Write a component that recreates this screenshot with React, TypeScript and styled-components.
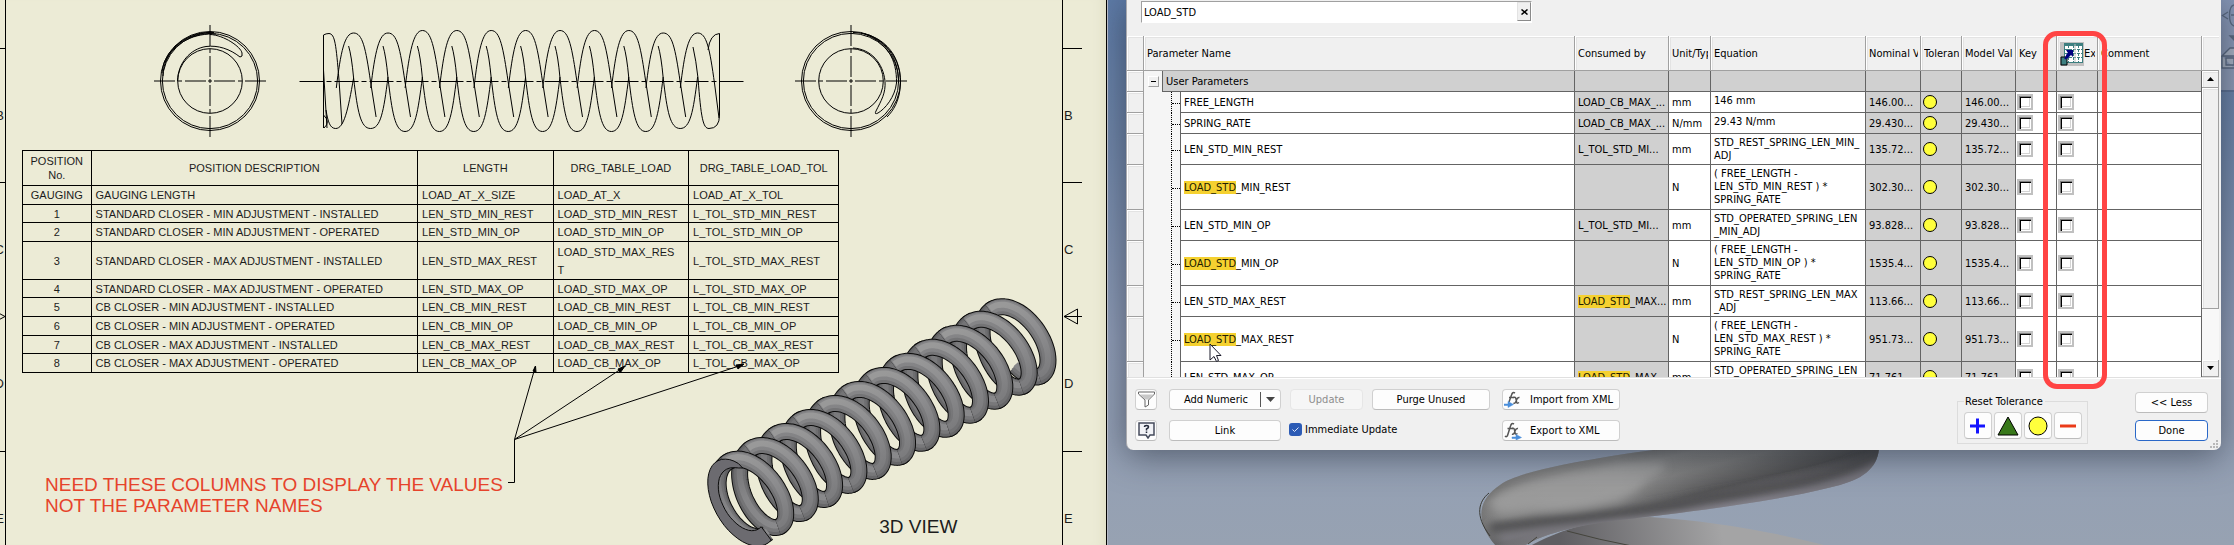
import React from "react";
import styled, { createGlobalStyle, css } from "styled-components";

const GlobalStyle = createGlobalStyle`
  * { box-sizing: border-box; }
  html, body { margin: 0; height: 100%; overflow: hidden; }
`;

const SHEET = "#ecebd6";
const GRID = "#646464";
const UI_FONT = `"DejaVu Sans Condensed", "DejaVu Sans", sans-serif`;
const DRAWING_FONT = `"Liberation Sans", Arial, sans-serif`;

const Screen = styled.div`
  display: grid;
  grid-template-columns: minmax(0, 1107fr) minmax(0, 1127fr);
  height: 100vh;
  overflow: hidden;
`;

/* ---------- drawing sheet ---------- */

const Sheet = styled.main`
  display: grid;
  grid-template-columns: 6px minmax(0, 1fr) 44px;
  background: ${SHEET};
  border-right: 1px solid #000;
  box-shadow: inset -12px 0 14px -12px #d9d8bd;
  font: 11px/14px ${DRAWING_FONT};
  color: #1c1c1c;
  overflow: hidden;
`;

const ZoneStrip = styled.div<{ $side: "left" | "right" }>`
  display: flex;
  flex-direction: column;
  position: relative;
  overflow: hidden;
  ${({ $side }) =>
    $side === "left"
      ? css`border-right: 1px solid #000; align-items: flex-end;`
      : css`border-left: 1px solid #000; align-items: flex-start;`}
`;

const Zone = styled.div<{ $h: number; $side: "left" | "right"; $line: boolean }>`
  flex: 0 0 ${({ $h }) => $h}px;
  width: 19px;
  display: flex;
  align-items: center;
  justify-content: ${({ $side }) => ($side === "left" ? "flex-end" : "flex-start")};
  padding: 0 1px;
  font-size: 13px;
  border-bottom: 1px solid ${({ $line }) => ($line ? "#000" : "transparent")};
`;

const ZoneArrow = styled.svg`
  position: absolute;
  top: 308px;
  left: 0;
`;

const SheetBody = styled.div`
  position: relative;
  display: flex;
  flex-direction: column;
  min-width: 0;
`;

const Views = styled.div`
  display: grid;
  grid-template-columns: 116px 448px 116px;
  align-items: start;
  height: 150px;
  padding: 23px 0 0 146px;
  column-gap: 31px;
  & > :last-child { justify-self: end; margin-right: -15px; }
`;

const PositionTable = styled.table`
  width: 77.4%;
  margin-left: 16px;
  border-collapse: collapse;
  table-layout: fixed;
  white-space: nowrap;
  th, td {
    border: 1px solid #000;
    font-weight: 400;
    padding: 0 4px;
    text-align: left;
  }
  thead th, tbody th { text-align: center; }
  tbody th { padding: 0; }
`;

const DrawCol = styled.col<{ $w: number }>`width: ${({ $w }) => $w}%;`;
const DrawRow = styled.tr<{ $h: number }>`height: ${({ $h }) => $h}px;`;

const SheetFoot = styled.div`
  flex: 1;
  display: flex;
  align-items: flex-start;
  font-size: 19px;
  line-height: 21px;
`;

const Note = styled.p`
  margin: 0;
  padding: 101px 0 0 39px;
  width: 82.7%;
  color: #e6432b;
`;

const Caption = styled.p`
  margin: 0;
  padding-top: 143px;
`;

const Overlay = styled.svg`
  position: absolute;
  inset: 0;
  pointer-events: none;
`;

const POSITIONS: [string, string, string, string, string, number][] = [
  ["GAUGING", "GAUGING LENGTH", "LOAD_AT_X_SIZE", "LOAD_AT_X", "LOAD_AT_X_TOL", 19],
  ["1", "STANDARD CLOSER - MIN ADJUSTMENT - INSTALLED", "LEN_STD_MIN_REST", "LOAD_STD_MIN_REST", "L_TOL_STD_MIN_REST", 18],
  ["2", "STANDARD CLOSER - MIN ADJUSTMENT - OPERATED", "LEN_STD_MIN_OP", "LOAD_STD_MIN_OP", "L_TOL_STD_MIN_OP", 19],
  ["3", "STANDARD CLOSER - MAX ADJUSTMENT - INSTALLED", "LEN_STD_MAX_REST", "LOAD_STD_MAX_RES\nT", "L_TOL_STD_MAX_REST", 38],
  ["4", "STANDARD CLOSER - MAX ADJUSTMENT - OPERATED", "LEN_STD_MAX_OP", "LOAD_STD_MAX_OP", "L_TOL_STD_MAX_OP", 18],
  ["5", "CB CLOSER - MIN ADJUSTMENT - INSTALLED", "LEN_CB_MIN_REST", "LOAD_CB_MIN_REST", "L_TOL_CB_MIN_REST", 19],
  ["6", "CB CLOSER - MIN ADJUSTMENT - OPERATED", "LEN_CB_MIN_OP", "LOAD_CB_MIN_OP", "L_TOL_CB_MIN_OP", 19],
  ["7", "CB CLOSER - MAX ADJUSTMENT - INSTALLED", "LEN_CB_MAX_REST", "LOAD_CB_MAX_REST", "L_TOL_CB_MAX_REST", 18],
  ["8", "CB CLOSER - MAX ADJUSTMENT - OPERATED", "LEN_CB_MAX_OP", "LOAD_CB_MAX_OP", "L_TOL_CB_MAX_OP", 19],
];

const WrappedValue = styled.span`
  display: block;
  white-space: pre;
  line-height: 18px;
`;

const EndView = ({ side }: { side: "left" | "right" }) => (
  <svg width="116" height="116" viewBox="-58 -58 116 116" fill="none" stroke="#000">
    <circle r="49.5" />
    <circle r="47.6" />
    <ellipse rx="32.3" ry="32.3" />
    {side === "left" ? (
      <g>
        <path d="M-47-5C-47-30-24-49 0-48.500M-48-8C-46-34-20-49 4-48.500M-45-18C-36-40-14-48 6-47" />
        <path d="M0-46.500C14-46 31-34 32-28Q33-24 30-24C20-32 8-36-4-34.500C-20-32-32-18-32.500 0" />
      </g>
    ) : (
      <g>
        <path d="M2-48.500C30-48 50-28 49.500 2C49 20 42 30 36 36M10-48C34-42 48-24 47.500 2M14-47C36-38 46-22 45.500 2C44 16 34 28 27 32Q23 34 25 30C30 20 35 12 34 0C32-18 20-32 2-33" />
      </g>
    )}
    <path d="M-56 0H-35M-32 0H-28M-25 0H-4M-2 0H2M4 0H25M28 0H32M35 0H56M0-56V-35M0-32V-28M0-25V-4M0-2V2M0 4V25M0 28V32M0 35V56" />
  </svg>
);

const SideView = () => {
  const first = 353.6;
  const pitch = 34.4;
  const loops = Array.from({ length: 11 }, (_, i) => {
    const p = first + i * pitch;
    const top = i < 2 || i > 8 ? 33 : 30.500;
    const bottom = i < 1 || i > 8 ? 128.500 : 131.500;
    const last = i === 10;
    return (
      <g key={i}>
        <path d={`M${p - 17.3} 88C${p - 13} 52 ${p - 9} ${top} ${p} ${top}C${p + 9} ${top} ${p + 12} 48 ${p + 17} ${last ? 84 : 82}${last ? "L719 118" : `L${p + 22.5} 117`}`} />
        {!last && (
          <path d={`M${p - 5} 46Q${p - 2} 56 ${p} 78C${p + 4} 112 ${p + 7} ${bottom} ${p + 17} ${bottom}C${p + 27} ${bottom} ${p + 30} 112 ${p + 34.4} 77`} />
        )}
      </g>
    );
  });
  return (
    <svg width="448" height="116" viewBox="299 23 448 116" fill="none" stroke="#000">
      <path d="M323.500 128V35Q326 33.500 329 33.500C335 34 336 44 339 80L342 124M323.500 70L327 128M323.500 115Q331 122 324 128" />
      <path d="M326 110C328 122 330 128.500 335.700 128.500C344 128.500 348 110 353.600 78" />
      <path d="M693 47Q696 60 698 78C701 118 703 128.500 709 128.500Q719.500 128.500 719.500 115V33.500Q710 34 708 50" />
      {loops}
      <path d="M299.500 81.500H746" strokeDasharray="24 3 5 3" />
    </svg>
  );
};

/*
 * Isometric helix. Each turn is split into its far half and its near half;
 * the far halves are painted first, then the near ones, both back to front.
 */
const buildCoil = () => {
  const R = 41;
  const pitch = 34.4;
  const turns = 12.2;
  const u = [0.5, 0.866];
  const v = [0.5, -0.289];
  const a = [0.707, -0.408];
  const origin = [742, 501];
  const start = 0.2;
  const endTurn = turns - 0.9;
  const rise = (t: number) => (t < 1 ? 4 + 20 * t * t : 24 + (t - 1) * pitch);
  const axial = (t: number) => (t > endTurn ? rise(endTurn) + (t - endTurn) * 22 : rise(t));
  const at = (t: number, r = R, z = axial(t)) => {
    const w = start - t * 2 * Math.PI;
    return [0, 1]
      .map((k) => (origin[k] + a[k] * z + r * (Math.cos(w) * u[k] + Math.sin(w) * v[k])).toFixed(1))
      .join(" ");
  };
  const arc = (from: number, to: number) => {
    const lo = Math.max(0, from);
    const hi = Math.min(turns, to);
    const n = 36;
    return `M${Array.from({ length: n + 1 }, (_, i) => at(lo + ((hi - lo) * i) / n)).join("L")}`;
  };
  const shift = start / (2 * Math.PI);
  const far: string[] = [];
  const near: string[] = [];
  for (let k = Math.floor(turns); k >= 0; k--) {
    const t = k + shift;
    if (t < turns) far.push(arc(t - 0.02, t + 0.52));
    if (t + 0.5 < turns) near.push(arc(t + 0.48, t + 1.02));
  }
  const outer: string[] = [];
  const inner: string[] = [];
  for (let i = 0; i <= 30; i++) {
    const t = (i / 30) * 0.66;
    const h = 8.5 * Math.sqrt(1 - Math.pow(i / 30, 3));
    outer.push(at(t, R + h, 0));
    inner.unshift(at(t, R - h, 0));
  }
  return { far, near, face: `M${outer.concat(inner).join("L")}Z` };
};

const coil = buildCoil();

const Strand = ({ d, tone }: { d: string; tone: "far" | "near" }) => (
  <g>
    <path d={d} stroke="#0c0c0c" strokeWidth="17" />
    <path d={d} stroke={`url(#${tone}Base)`} strokeWidth="15" />
    <path d={d} stroke={`url(#${tone}Mid)`} strokeWidth="11" transform="translate(0 -1)" />
    <path d={d} stroke={`url(#${tone}Lit)`} strokeWidth="6" transform="translate(0 -2)" />
  </g>
);

const TONES: [string, string, string, string][] = [
  ["farBase", "#5d5d5f", "#666668", "#68686a"],
  ["farMid", "#6a6a6c", "#757577", "#78787a"],
  ["farLit", "#747476", "#858587", "#89898b"],
  ["nearBase", "#747476", "#747476", "#666668"],
  ["nearMid", "#858587", "#818183", "#727274"],
  ["nearLit", "#999999", "#8d8d8f", "#7c7c7e"],
];

const SpringModel = () => (
  <Overlay width="1056" height="545" viewBox="6 0 1056 545" fill="none" strokeLinejoin="round">
    <defs>
      {TONES.map(([id, top, middle, bottom]) => (
        <linearGradient key={id} id={id} gradientUnits="userSpaceOnUse" x1="725" y1="466" x2="765" y2="536">
          <stop offset="0" stopColor={top} />
          <stop offset=".5" stopColor={middle} />
          <stop offset="1" stopColor={bottom} />
        </linearGradient>
      ))}
    </defs>
    {coil.far.map((d) => <Strand key={d} d={d} tone="far" />)}
    {coil.near.map((d) => <Strand key={d} d={d} tone="near" />)}
    <path d={coil.face} fill="#6c6b70" stroke="#0c0c0c" />
  </Overlay>
);

const Leader = () => (
  <Overlay width="1056" height="545" viewBox="6 0 1056 545" fill="none" stroke="#000">
    <path d="M508 482.500H514.500V439.500L535.500 366M514.500 439.500L624 367M514.500 439.500L742 365" />
    <path d="M535.500 366L533 371L536 372ZM625 366L618 369L620 373ZM744 364L736 365L738 369Z" fill="#000" />
  </Overlay>
);

const ZONES: [string, number, boolean][] = [
  ["", 49, true],
  ["B", 134, true],
  ["C", 134, false],
  ["D", 135, true],
  ["E", 134, false],
];

const Zones = ({ side }: { side: "left" | "right" }) => (
  <ZoneStrip $side={side}>
    {ZONES.map(([name, h, line], i) => (
      <Zone key={i} $h={h} $side={side} $line={line}>{name}</Zone>
    ))}
    <ZoneArrow width="20" height="18" viewBox="0 0 20 18" fill="none" stroke="#000">
      {side === "right" ? <path d="M1 8.500L14.500 1V16ZM1 8.500H19" /> : <path d="M5 8.500L-9 1V16Z" />}
    </ZoneArrow>
  </ZoneStrip>
);

const DrawingSheet = () => (
  <Sheet>
    <Zones side="left" />
    <SheetBody>
      <Views>
        <EndView side="left" />
        <SideView />
        <EndView side="right" />
      </Views>
      <PositionTable>
        <colgroup>
          <DrawCol $w={8.4} /><DrawCol $w={40} /><DrawCol $w={16.6} /><DrawCol $w={16.6} /><DrawCol $w={18.4} />
        </colgroup>
        <thead>
          <DrawRow $h={35}>
            <th>POSITION<br />No.</th>
            <th>POSITION DESCRIPTION</th>
            <th>LENGTH</th>
            <th>DRG_TABLE_LOAD</th>
            <th>DRG_TABLE_LOAD_TOL</th>
          </DrawRow>
        </thead>
        <tbody>
          {POSITIONS.map(([no, text, len, load, tol, h]) => (
            <DrawRow key={no} $h={h}>
              <th scope="row">{no}</th>
              <td>{text}</td>
              <td>{len}</td>
              <td>{load.includes("\n") ? <WrappedValue>{load}</WrappedValue> : load}</td>
              <td>{tol}</td>
            </DrawRow>
          ))}
        </tbody>
      </PositionTable>
      <SheetFoot>
        <Note>NEED THESE COLUMNS TO DISPLAY THE VALUES<br />NOT THE PARAMETER NAMES</Note>
        <Caption>3D VIEW</Caption>
      </SheetFoot>
      <SpringModel />
      <Leader />
    </SheetBody>
    <Zones side="right" />
  </Sheet>
);

/* ---------- model viewer ---------- */

const Viewer = styled.section`
  position: relative;
  display: grid;
  grid-template-columns: 18px minmax(0, 1fr) 13px;
  align-items: start;
  overflow: hidden;
  border-left: 1px solid #b5b9c6;
  background: linear-gradient(#5d7aa6, #6f85a8 25%, #8f9cb6 62%, #97a2b2 100%);
`;

const Backdrop = styled.svg`
  position: absolute;
  left: 0;
  bottom: 0;
`;

const NavBar = styled.div`
  grid-column: 3;
  height: 92px;
  background: linear-gradient(#8494b4, #8d9ab4);
  border-bottom: 2px solid #5c7093;
`;

const BigCoil = () => (
  <Backdrop width="1126" height="100" viewBox="1108 445 1126 100">
    <defs>
      <linearGradient id="tube" gradientUnits="userSpaceOnUse" x1="1660" y1="448" x2="1678" y2="520">
        <stop offset="0" stopColor="#6e6e6e" />
        <stop offset=".15" stopColor="#858585" />
        <stop offset=".4" stopColor="#828282" />
        <stop offset=".72" stopColor="#555557" />
        <stop offset=".88" stopColor="#77757c" />
        <stop offset="1" stopColor="#8b8994" />
      </linearGradient>
      <linearGradient id="shade" x1="0" x2="1" y1="0" y2="0">
        <stop offset="0" stopColor="#444" stopOpacity=".5" />
        <stop offset=".08" stopColor="#999" stopOpacity=".2" />
        <stop offset=".35" stopColor="#aaa" stopOpacity=".35" />
        <stop offset=".6" stopColor="#555" stopOpacity=".15" />
        <stop offset="1" stopColor="#333" stopOpacity=".5" />
      </linearGradient>
      <linearGradient id="lower" gradientUnits="userSpaceOnUse" x1="1560" y1="545" x2="1720" y2="520">
        <stop offset="0" stopColor="#5f5e62" />
        <stop offset="1" stopColor="#a4a4a5" />
      </linearGradient>
      <filter id="soft" x="-20%" y="-50%" width="140%" height="200%"><feGaussianBlur stdDeviation="4" /></filter>
      <clipPath id="tubeClip">
        <path d="M1496 546C1474 520 1478 500 1500 485C1515 473 1570 463 1600 458C1640 451 1670 448 1700 444H1879C1880 465 1866 478 1840 485C1780 501 1690 512 1620 520C1570 526 1540 536 1524 546Z" />
      </clipPath>
    </defs>
    <path d="M1530 546C1570 524 1610 518 1650 517C1710 521 1770 531 1828 546Z" fill="url(#lower)" />
    <path d="M1567 531Q1600 540 1632 546" stroke="#44443c" fill="none" />
    <g clipPath="url(#tubeClip)">
      <rect x="1470" y="440" width="420" height="110" fill="url(#tube)" />
      <rect x="1470" y="440" width="420" height="110" fill="url(#shade)" />
      <g filter="url(#soft)">
        <path d="M1490 505C1500 480 1580 465 1660 463C1680 466 1640 480 1640 488C1620 505 1570 512 1545 510C1520 508 1500 520 1490 505Z" fill="#a0a0a0" opacity=".75" />
        <path d="M1490 528C1550 520 1640 514 1700 500C1780 486 1840 480 1880 450" stroke="#4b4b4d" strokeWidth="9" fill="none" />
        <path d="M1500 540C1560 528 1620 526 1700 515C1780 504 1850 492 1880 466" stroke="#85838c" strokeWidth="6" fill="none" />
      </g>
    </g>
    <path d="M1490 536C1474 515 1479 501 1489 493" stroke="#3b3b36" fill="none" />
    <path d="M1528 544L1537 537" stroke="#44443c" />
  </Backdrop>
);

const Dialog = styled.div`
  grid-column: 2;
  grid-row: 1;
  position: relative;
  display: flex;
  flex-direction: column;
  background: #f0f0f0;
  border-left: 1px solid #a9a9ad;
  border-radius: 0 0 7px 7px;
  box-shadow: 0 6px 34px rgba(20, 28, 40, 0.5);
  font: 11px/13px ${UI_FONT};
  color: #000;
  button, input { font: inherit; color: inherit; }
`;

const SearchBar = styled.div`
  display: flex;
  width: 391px;
  height: 22px;
  margin: 1px 0 13px 14px;
  background: #fff;
  border: 1px solid #a0a0a0;
  border-right-color: #fff;
  border-bottom-color: #fff;
`;

const SearchInput = styled.input`
  flex: 1;
  min-width: 0;
  border: 0;
  padding: 0 2px;
  background: none;
  outline: 0;
`;

const ClearButton = styled.button`
  width: 14px;
  height: 19px;
  padding: 0;
  border: 1px solid #e3e3e3;
  border-right-color: #8a8a8a;
  border-bottom-color: #8a8a8a;
  background: #f0f0f0;
  display: flex;
  align-items: center;
  justify-content: center;
`;

const Pane = styled.div`
  display: flex;
  height: 342px;
  margin: 0 2px 0 0;
  overflow: hidden;
  border-bottom: 1px solid #e0e0e0;
`;

const PaneBody = styled.div`
  flex: 1;
  min-width: 0;
`;

const ParamTable = styled.table`
  width: 100%;
  table-layout: fixed;
  border-collapse: separate;
  border-spacing: 0;
  th, td {
    padding: 0;
    font-weight: 400;
    text-align: left;
    white-space: nowrap;
    overflow: hidden;
  }
  thead th { padding-top: 1px; }
`;

const ParamCol = styled.col<{ $w?: number }>`
  ${({ $w }) => $w && `width: ${$w}px;`}
`;

const bevel = css`
  box-shadow: inset 1px 1px #fff, inset 2px 2px #e3e3e3;
`;

const HeadCell = styled.th`
  height: 35px;
  border-right: 1px solid #a0a0a0;
  border-bottom: 1px solid #a0a0a0;
  ${bevel}
`;

const HeadLabel = styled.div`
  display: flex;
  align-items: center;
  margin: 0 2px 0 3px;
  overflow: hidden;
  & > svg { flex: none; }
`;

const RowHead = styled.th`
  border-right: 1px solid #a0a0a0;
  border-bottom: 1px solid #a0a0a0;
  ${bevel}
`;

const ParamRow = styled.tr<{ $h: number }>`
  height: ${({ $h }) => $h}px;
`;

const TreeCell = styled.td`
  position: relative;
  background: #f5f5f5;
  border-right: 1px solid ${GRID};
  &::before {
    content: "";
    position: absolute;
    left: 27px;
    top: 0;
    bottom: 0;
    border-left: 1px dotted #000;
  }
  &::after {
    content: "";
    position: absolute;
    left: 28px;
    right: 0;
    top: 50%;
    border-top: 1px dotted #000;
  }
`;

const ToggleCell = styled.td`
  background: #f5f5f5;
  border-right: 1px solid ${GRID};
`;

const TreeToggle = styled.button`
  display: flex;
  align-items: center;
  justify-content: center;
  width: 11px;
  height: 11px;
  margin-left: 4px;
  padding: 0;
  background: #f0f0f0;
  border: 1px solid #fff;
  border-right-color: #a0a0a0;
  border-bottom-color: #a0a0a0;
`;

const Cell = styled.td<{ $tone?: "grey" | "group"; $top?: boolean }>`
  border-right: 1px solid ${GRID};
  border-bottom: 1px solid ${GRID};
  background: ${({ $tone }) => ($tone ? "#d0d0d0" : "#fff")};
  vertical-align: ${({ $top }) => ($top ? "top" : "middle")};
`;

const CellText = styled.div<{ $pad?: boolean }>`
  padding: ${({ $pad }) => ($pad ? "2px 0 0 3px" : "0 0 0 3px")};
  white-space: pre;
`;

const Mark = styled.mark`
  background: #f5d130;
  color: #221c00;
`;

const GridCheck = styled.input`
  appearance: none;
  display: block;
  width: 16px;
  height: 16px;
  margin: 0 0 0 1px;
  border: 2px solid #c0c0c0;
  background: #fff;
  box-shadow: inset 1px 1px #808080, inset 2px 2px #000, inset -1px -1px #fff, inset -2px -2px #d4d4d4;
`;

const ToleranceDot = styled.span`
  display: block;
  width: 14px;
  height: 14px;
  margin-left: 2px;
  border: 1px solid #000;
  border-radius: 50%;
  background: #ffff3c;
`;

const ScrollBar = styled.div`
  flex: 0 0 17px;
  display: flex;
  flex-direction: column;
  background: #f8f8f8;
`;

const ScrollCorner = styled.div`
  height: 35px;
  background: #f0f0f0;
  border-bottom: 1px solid #a0a0a0;
  ${bevel}
`;

const ScrollButton = styled.button`
  height: 17px;
  flex: none;
  padding: 0;
  display: flex;
  align-items: center;
  justify-content: center;
  background: #f0f0f0;
  border: 0 solid #a0a0a0;
  border-width: 0 1px 1px 0;
  ${bevel}
`;

const ScrollThumb = styled.div`
  height: 221px;
  background: #f0f0f0;
  border: 0 solid #a0a0a0;
  border-width: 0 1px 1px 0;
  margin-bottom: auto;
  ${bevel}
`;

const Footer = styled.div`
  display: flex;
  align-items: flex-start;
  height: 72px;
  padding: 10px 13px 0 8px;
  border-top: 1px solid #fff;
`;

const ButtonGrid = styled.div`
  display: grid;
  grid-template-columns: 25px 112px 73px 121px 118px;
  grid-template-rows: 21px 21px;
  column-gap: 9px;
  row-gap: 10px;
  & > :nth-child(1), & > :nth-child(4), & > :nth-child(6) { margin-right: 3px; }
`;

const PushButton = styled.button<{ $primary?: boolean }>`
  display: flex;
  align-items: center;
  justify-content: center;
  height: 21px;
  padding: 0;
  background: #fdfdfd;
  border: 1px solid ${({ $primary }) => ($primary ? "#2a68c8" : "#d0d0d0")};
  border-bottom-color: ${({ $primary }) => ($primary ? "#2a68c8" : "#bcbcbc")};
  border-radius: 4px;
  & > svg { flex: none; }
  &:disabled { color: #8d8d8d; background: #f6f6f6; border-color: #e6e6e6; }
`;

const SplitLabel = styled.span`
  flex: 1;
  text-align: center;
  padding-left: 2px;
`;

const SplitArrow = styled.span`
  display: flex;
  align-items: center;
  justify-content: center;
  width: 20px;
  height: 15px;
  border-left: 1px solid #555;
`;

const IconButton = styled(PushButton)`
  justify-content: flex-start;
  padding-left: 1px;
  gap: 8px;
`;

const CheckLabel = styled.label`
  grid-column: 3 / 5;
  grid-row: 2;
  display: flex;
  align-items: center;
  gap: 3px;
  margin-left: -1px;
  padding-bottom: 2px;
`;

const BlueCheck = styled.input`
  appearance: none;
  width: 13px;
  height: 13px;
  margin: 0;
  border-radius: 3px;
  background: #2c5bb5;
`;

const CheckBoxWrap = styled.span`
  display: grid;
  & > * { grid-area: 1 / 1; }
`;

const ToleranceGroup = styled.fieldset`
  width: 131px;
  height: 49px;
  margin: 6px 47px 0 auto;
  padding: 4px 0 0 6px;
  border: 1px solid #dcdcdc;
`;

const GroupLegend = styled.legend`
  padding: 0 2px 0 1px;
`;

const GroupButtons = styled.div`
  display: flex;
  gap: 2px;
`;

const SquareButton = styled(PushButton)`
  width: 28px;
  height: 27px;
`;

const CloseButtons = styled.div`
  display: grid;
  gap: 7px;
  width: 73px;
  padding-top: 3px;
`;

const Highlight = styled.div`
  position: absolute;
  z-index: 2;
  right: 114px;
  top: 31px;
  width: 64px;
  height: 358px;
  border: 5px solid #ff4444;
  border-radius: 14px;
  pointer-events: none;
`;

const Cursor = styled.svg`
  position: absolute;
  left: 82px;
  top: 343px;
`;

const Grip = styled.svg`
  position: absolute;
  right: 3px;
  bottom: 2px;
`;

type Param = { name: string; by?: string; unit: string; eq: string; value: string };

const PARAMS: Param[] = [
  { name: "FREE_LENGTH", by: "LOAD_CB_MAX_...", unit: "mm", eq: "146 mm", value: "146.00..." },
  { name: "SPRING_RATE", by: "LOAD_CB_MAX_...", unit: "N/mm", eq: "29.43 N/mm", value: "29.430..." },
  { name: "LEN_STD_MIN_REST", by: "L_TOL_STD_MI...", unit: "mm", eq: "STD_REST_SPRING_LEN_MIN_\nADJ", value: "135.72..." },
  { name: "LOAD_STD_MIN_REST", unit: "N", eq: "( FREE_LENGTH -\nLEN_STD_MIN_REST ) *\nSPRING_RATE", value: "302.30..." },
  { name: "LEN_STD_MIN_OP", by: "L_TOL_STD_MI...", unit: "mm", eq: "STD_OPERATED_SPRING_LEN\n_MIN_ADJ", value: "93.828..." },
  { name: "LOAD_STD_MIN_OP", unit: "N", eq: "( FREE_LENGTH -\nLEN_STD_MIN_OP ) *\nSPRING_RATE", value: "1535.4..." },
  { name: "LEN_STD_MAX_REST", by: "LOAD_STD_MAX...", unit: "mm", eq: "STD_REST_SPRING_LEN_MAX\n_ADJ", value: "113.66..." },
  { name: "LOAD_STD_MAX_REST", unit: "N", eq: "( FREE_LENGTH -\nLEN_STD_MAX_REST ) *\nSPRING_RATE", value: "951.73..." },
  { name: "LEN_STD_MAX_OP", by: "LOAD_STD_MAX...", unit: "mm", eq: "STD_OPERATED_SPRING_LEN\n_MAX_ADJ", value: "71.761..." },
];

const HEIGHTS = [21, 31, 45];
const QUERY = "LOAD_STD";

const Found = ({ text }: { text: string }) =>
  text.startsWith(QUERY) ? <><Mark>{QUERY}</Mark>{text.slice(QUERY.length)}</> : <>{text}</>;

const ExportIcon = () => (
  <svg width="24" height="24" viewBox="0 0 24 24">
    <path d="M0 0H24V24H0Z" fill="#c0c0c0" />
    <path d="M4 1H23V21H4Z" fill="#3d7f80" />
    <path d="M5 4H22V20H5Z" fill="#fff" />
    <path d="M5 7.500H22M5 11.500H22M5 15.500H22M8.500 3V20M13.500 3V20M18.500 3V20" stroke="#3d7f80" strokeDasharray="3 1" />
    <path d="M15 2V20" stroke="#c0c0c0" />
    <path d="M1 15H7V23H1Z" fill="#3d7f80" stroke="#000" />
    <path d="M5 17L9 11" stroke="#000080" strokeWidth="2" />
    <path d="M6 8H13V15L11 13L7 17L6 13L8 11Z" fill="#000080" />
  </svg>
);

const FxIcon = ({ out }: { out?: boolean }) => (
  <svg width="18" height="19" viewBox="0 0 18 19" fill="none" stroke="#555" strokeWidth="1.500">
    {out ? (
      <>
        <path d="M1 15Q3 17 4 13L6.500 5Q7.500 1.500 10 3M3.500 7.500H9" />
        <path d="M8 7.500Q10 6.500 10.500 9L11 12Q11.500 14 13.500 12.500M14 7.500Q12 7 11 10Q10 14 8 13" />
        <path d="M8 16H12V13.500L17.500 16.500L12 19V17.500H8Z" fill="#4a8edb" stroke="#4a8edb" strokeWidth=".5" />
      </>
    ) : (
      <>
        <path d="M5 12L7.500 5Q8.500 1.500 11 3M5 7.500H10" />
        <path d="M9.500 7.500Q11.500 6.500 12 9L12.500 12Q13 14 15 12.500M15.500 7.500Q13.500 7 12.500 10Q11.500 14 9.500 13" />
        <path d="M0 14H4V11.500L9.500 14.500L4 17.500V15.500H0Z" fill="#4a8edb" stroke="#4a8edb" strokeWidth=".5" />
      </>
    )}
  </svg>
);

const COLUMNS = ["Consumed by", "Unit/Type", "Equation", "Nominal Value", "Tolerance", "Model Value", "Key"];

const ParametersDialog = () => (
  <Dialog role="dialog" aria-label="Parameters">
    <SearchBar>
      <SearchInput aria-label="Search parameters" defaultValue="LOAD_STD" />
      <ClearButton aria-label="Clear">
        <svg width="7" height="6" viewBox="0 0 7 6" stroke="#000" strokeWidth="1.500"><path d="M.5.5L6.500 5.500M6.500.5L.5 5.500" /></svg>
      </ClearButton>
    </SearchBar>
    <Pane>
      <PaneBody>
        <ParamTable>
          <colgroup>
            {[17, 19, 18, 0, 94, 42, 155, 55, 41, 54, 41, 41, 104].map((w, i) => (
              <ParamCol key={i} $w={w || undefined} />
            ))}
          </colgroup>
          <thead>
            <tr>
              <HeadCell />
              <HeadCell colSpan={3}><HeadLabel>Parameter Name</HeadLabel></HeadCell>
              {COLUMNS.map((c) => <HeadCell key={c}><HeadLabel>{c}</HeadLabel></HeadCell>)}
              <HeadCell><HeadLabel><ExportIcon />Export</HeadLabel></HeadCell>
              <HeadCell><HeadLabel>Comment</HeadLabel></HeadCell>
            </tr>
          </thead>
          <tbody>
            <ParamRow $h={21}>
              <RowHead />
              <ToggleCell>
                <TreeToggle aria-label="Collapse">
                  <svg width="5" height="1"><path d="M0 .5H5" stroke="#000" /></svg>
                </TreeToggle>
              </ToggleCell>
              <Cell $tone="group" colSpan={2}><CellText>User Parameters</CellText></Cell>
              {Array.from({ length: 9 }, (_, i) => <Cell key={i} $tone="group" />)}
            </ParamRow>
            {PARAMS.map((p) => (
              <ParamRow key={p.name} $h={HEIGHTS[p.eq.split("\n").length - 1]}>
                <RowHead />
                <TreeCell colSpan={2} />
                <Cell><CellText><Found text={p.name} /></CellText></Cell>
                <Cell $tone="grey"><CellText><Found text={p.by ?? ""} /></CellText></Cell>
                <Cell><CellText>{p.unit}</CellText></Cell>
                <Cell $top><CellText $pad>{p.eq}</CellText></Cell>
                <Cell $tone="grey"><CellText>{p.value}</CellText></Cell>
                <Cell $tone="grey"><ToleranceDot /></Cell>
                <Cell $tone="grey"><CellText>{p.value}</CellText></Cell>
                <Cell><GridCheck type="checkbox" aria-label={`${p.name} key`} /></Cell>
                <Cell><GridCheck type="checkbox" aria-label={`${p.name} export`} /></Cell>
                <Cell />
              </ParamRow>
            ))}
          </tbody>
        </ParamTable>
      </PaneBody>
      <ScrollBar>
        <ScrollCorner />
        <ScrollButton aria-label="Scroll up"><svg width="7" height="4"><path d="M3.500 0L7 4H0Z" /></svg></ScrollButton>
        <ScrollThumb />
        <ScrollButton aria-label="Scroll down"><svg width="7" height="4"><path d="M0 0H7L3.500 4Z" /></svg></ScrollButton>
      </ScrollBar>
    </Pane>
    <Footer>
      <ButtonGrid>
        <PushButton aria-label="Filter">
          <svg width="17" height="17" viewBox="0 0 17 17" fill="none" stroke="#666">
            <path d="M.5 1H16.500V3L10.500 9V14L7 16V9L.5 3Z" fill="#fff" />
            <path d="M2 3.500H15L10 8.500H7Z" fill="#c8c8c8" stroke="none" />
          </svg>
        </PushButton>
        <PushButton>
          <SplitLabel>Add Numeric</SplitLabel>
          <SplitArrow><svg width="9" height="5"><path d="M0 0H9L4.500 5Z" fill="#444" /></svg></SplitArrow>
        </PushButton>
        <PushButton disabled>Update</PushButton>
        <PushButton>Purge Unused</PushButton>
        <IconButton><FxIcon />Import from XML</IconButton>
        <PushButton aria-label="Help">
          <svg width="17" height="17" viewBox="0 0 17 17" fill="none" stroke="#454b5c">
            <path d="M1 1H16V13H12L10 16L8 13H1Z" fill="#f2f3f7" strokeWidth="1.500" />
            <path d="M6.500 5Q6.500 3.500 8.500 3.500Q10.500 3.500 10.500 5Q10.500 6 8.500 7V8.500M8.500 9.500V11" stroke="#222838" strokeWidth="1.500" />
          </svg>
        </PushButton>
        <PushButton>Link</PushButton>
        <CheckLabel>
          <CheckBoxWrap>
            <BlueCheck type="checkbox" defaultChecked />
            <svg width="13" height="13" viewBox="0 0 13 13" fill="none" stroke="#dfe8f8"><path d="M3.500 6.500L5.500 8.500L9.500 4.500" /></svg>
          </CheckBoxWrap>
          Immediate Update
        </CheckLabel>
        <IconButton><FxIcon out />Export to XML</IconButton>
      </ButtonGrid>
      <ToleranceGroup>
        <GroupLegend>Reset Tolerance</GroupLegend>
        <GroupButtons>
          <SquareButton aria-label="Plus">
            <svg width="16" height="16"><path d="M0 8H15M7.500 .5V15.500" stroke="#1414ff" strokeWidth="3" /></svg>
          </SquareButton>
          <SquareButton aria-label="Maximum">
            <svg width="22" height="20"><path d="M11 1L21 19H1Z" fill="#38781a" stroke="#000" /></svg>
          </SquareButton>
          <SquareButton aria-label="Nominal">
            <svg width="20" height="20"><circle cx="10" cy="10" r="9" fill="#ffff3c" stroke="#000" /></svg>
          </SquareButton>
          <SquareButton aria-label="Minus">
            <svg width="16" height="4"><path d="M0 2H16" stroke="#ea3a18" strokeWidth="3" /></svg>
          </SquareButton>
        </GroupButtons>
      </ToleranceGroup>
      <CloseButtons>
        <PushButton>&lt;&lt; Less</PushButton>
        <PushButton $primary>Done</PushButton>
      </CloseButtons>
    </Footer>
    <Grip width="8" height="8" fill="#b8b8b8">
      <path d="M6 0H8V2H6ZM3 3H5V5H3ZM6 3H8V5H6ZM0 6H2V8H0ZM3 6H5V8H3ZM6 6H8V8H6Z" />
    </Grip>
    <Highlight />
    <Cursor width="13" height="20" viewBox="0 0 13 20">
      <path d="M1 1V17L5 13.500L7.500 18.500L9.500 17.500L7.500 12.500H12Z" fill="#fff" stroke="#1a1a2a" />
    </Cursor>
  </Dialog>
);

export default function App() {
  return (
    <Screen>
      <GlobalStyle />
      <DrawingSheet />
      <Viewer>
        <BigCoil />
        <ParametersDialog />
        <NavBar>
          <svg width="13" height="90" viewBox="0 0 13 90" fill="none" stroke="#59687f" strokeWidth="1.300">
            <path d="M7 12L1.500 15.500L7 19M13 5Q8.500 6 8.500 15Q8.500 25 13 26M10 15H13" />
            <path d="M9 36H13V40Z" fill="#59687f" />
            <path d="M13 48H9L1 56H13M1 56V68H13M5 58H13V65H5Z" fill="#a5afc0" />
          </svg>
        </NavBar>
      </Viewer>
    </Screen>
  );
}
